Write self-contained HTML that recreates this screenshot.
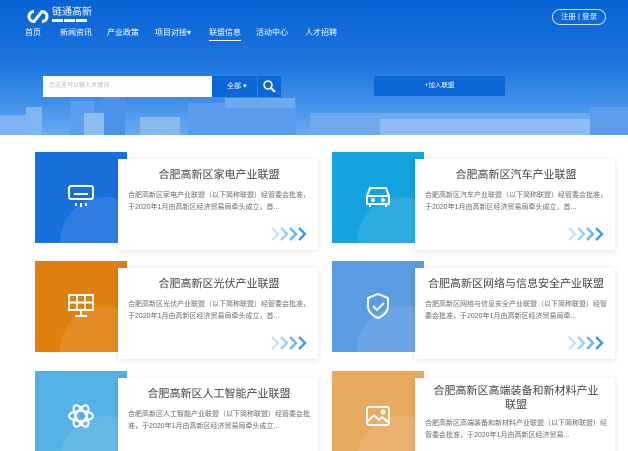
<!DOCTYPE html>
<html><head><meta charset="utf-8"><style>
*{margin:0;padding:0;box-sizing:border-box}
html,body{width:628px;height:451px;overflow:hidden}
body{background:#fff;font-family:"Liberation Sans","Noto Sans CJK SC",sans-serif;position:relative}
.hd{position:absolute;left:0;top:0;width:628px;height:135px;background:linear-gradient(180deg,#0a63d6 0%,#1a73df 45%,#3f8fe8 75%,#6aaaf0 100%);overflow:hidden}
.a{position:absolute}
.nav{position:absolute;top:27px;color:#fff;font-size:8px}
.card{position:absolute;width:92px;height:91px;overflow:hidden}
.card:after{content:"";position:absolute;left:25px;top:45px;width:90px;height:90px;border-radius:50%;background:rgba(255,255,255,.1)}
.card svg{position:absolute;left:31px;top:30px}
.w{position:absolute;width:200px;height:91px;background:#fff;box-shadow:0 1px 6px rgba(0,0,0,.12);padding:9px 8px 0 10px}
.w h3{font-weight:normal;font-size:11px;color:#444;text-align:center;line-height:14px;white-space:nowrap}
.w p{font-size:7px;color:#666;line-height:12px;margin-top:8px}
.ar{position:absolute;right:10px;bottom:8px}
</style></head><body>
<div class="hd">
 <svg class="a" style="left:0;top:95px" width="628" height="40">
  <rect x="26" y="12" width="16" height="28" fill="#7fb6f2"/><rect x="70" y="6" width="24" height="34" fill="#5a9eee"/><rect x="100" y="0" width="25" height="40" fill="#4a92ea"/><rect x="84" y="18" width="20" height="22" fill="#8cbcf2"/>
  <rect x="188" y="8" width="108" height="32" fill="#5a9cec"/><rect x="225" y="3" width="70" height="10" fill="#6ea8ee"/>
  <rect x="310" y="18" width="320" height="22" fill="#6ea8ef"/><rect x="380" y="24" width="220" height="16" fill="#8fbdf3"/><rect x="590" y="12" width="38" height="28" fill="#5b9ced"/>
  <rect x="0" y="20" width="26" height="20" fill="#7fb2f0"/><rect x="140" y="22" width="40" height="18" fill="#8ab9f2"/>
 </svg>
 <svg class="a" style="left:26px;top:9px" width="24" height="15"><path d="M8 2.5 A5 5 0 1 0 8 12.5 L16 2.5 A5 5 0 1 1 16 12.5" fill="none" stroke="#fff" stroke-width="3"/></svg>
 <div class="a" style="left:52px;top:7px;color:#fff;font-size:10px;line-height:11px">链通高新</div>
 <div class="a" style="left:52px;top:19px;width:36px;height:3px;background:repeating-linear-gradient(90deg,#fff 0 11px,transparent 11px 12px)"></div>
 <div class="nav" style="left:25px">首页</div><div class="nav" style="left:60px">新闻资讯</div><div class="nav" style="left:107px">产业政策</div><div class="nav" style="left:155px">项目对接▾</div><div class="nav" style="left:209px;border-bottom:1px solid #fff;padding-bottom:2px">联盟信息</div><div class="nav" style="left:256px">活动中心</div><div class="nav" style="left:305px">人才招聘</div>
 <div class="a" style="left:552px;top:9px;width:54px;height:16px;border:1px solid #cfe2fa;border-radius:8px;color:#fff;font-size:7.5px;text-align:center;line-height:14px">注册 | 登录</div>
 <div class="a" style="left:43px;top:76px;width:169px;height:21px;background:#fff;color:#bbb;font-size:6px;line-height:21px;padding-left:6px">您这里可以输入关键词</div>
 <div class="a" style="left:212px;top:76px;width:45px;height:21px;background:#0b66d8;color:#fff;font-size:7px;line-height:21px;padding-left:15px">全部 ▾</div>
 <div class="a" style="left:258px;top:76px;width:23px;height:21px;background:#0b66d8"><svg width="23" height="21"><circle cx="10" cy="9" r="4" fill="none" stroke="#fff" stroke-width="1.5"/><path d="M13 12 L17 16" stroke="#fff" stroke-width="2"/></svg></div>
 <div class="a" style="left:374px;top:76px;width:131px;height:20px;background:#0b66d8;color:#fff;font-size:6.5px;line-height:20px;text-align:center">+加入联盟</div>
</div>

<svg width="0" height="0" style="position:absolute"><defs><g id="arr" fill="none" stroke-width="2.4"><path d="M2 2l6 6-6 6" stroke="#c6e3fb"/><path d="M11 2l6 6-6 6" stroke="#9cd0f7"/><path d="M20 2l6 6-6 6" stroke="#6bb6f1"/><path d="M29 2l6 6-6 6" stroke="#3a9be8"/></g></defs></svg>

<div class="card" style="left:35px;top:152px;background:#1870dc"><svg width="30" height="30" fill="none" stroke="#fff" stroke-width="2"><rect x="3" y="4" width="24" height="13" rx="2"/><path d="M8 12h14M10 21v3M15 21v4M20 21v3"/></svg></div>
<div class="w" style="left:118px;top:159px"><h3>合肥高新区家电产业联盟</h3><p>合肥高新区家电产业联盟（以下简称联盟）经管委会批准，于2020年1月由高新区经济贸易局牵头成立，首...</p><svg class="ar" width="38" height="16"><use href="#arr"/></svg></div>
<div class="card" style="left:332px;top:152px;background:#14a3de"><svg width="30" height="30" fill="none" stroke="#fff" stroke-width="2"><path d="M7 6h16l3 8v8H4v-8z M4 14h22"/><circle cx="10" cy="18" r="1"/><circle cx="20" cy="18" r="1"/><path d="M7 22v3M23 22v3"/></svg></div>
<div class="w" style="left:415px;top:159px"><h3>合肥高新区汽车产业联盟</h3><p>合肥高新区汽车产业联盟（以下简称联盟）经管委会批准，于2020年1月由高新区经济贸易局牵头成立，首...</p><svg class="ar" width="38" height="16"><use href="#arr"/></svg></div>

<div class="card" style="left:35px;top:261px;background:#e07f0c"><svg width="30" height="30" fill="none" stroke="#fff" stroke-width="2"><rect x="3" y="4" width="24" height="15"/><path d="M3 11.5h24M11 4v15M19 4v15M15 19v5M9 25h12"/></svg></div>
<div class="w" style="left:118px;top:268px"><h3>合肥高新区光伏产业联盟</h3><p>合肥高新区光伏产业联盟（以下简称联盟）经管委会批准，于2020年1月由高新区经济贸易局牵头成立，首...</p><svg class="ar" width="38" height="16"><use href="#arr"/></svg></div>
<div class="card" style="left:332px;top:261px;background:#5a9ce2"><svg width="30" height="30" fill="none" stroke="#fff" stroke-width="2"><path d="M15 3l10 4v8c0 6-5 10-10 12C10 25 5 21 5 15V7z"/><path d="M10 15l4 4 7-7"/></svg></div>
<div class="w" style="left:415px;top:268px"><h3>合肥高新区网络与信息安全产业联盟</h3><p>合肥高新区网络与信息安全产业联盟（以下简称联盟）经管委会批准，于2020年1月由高新区经济贸易局牵...</p><svg class="ar" width="38" height="16"><use href="#arr"/></svg></div>

<div class="card" style="left:35px;top:371px;background:#55b2e4"><svg width="30" height="30" fill="none" stroke="#fff" stroke-width="2"><ellipse cx="15" cy="15" rx="12" ry="5"/><ellipse cx="15" cy="15" rx="12" ry="5" transform="rotate(60 15 15)"/><ellipse cx="15" cy="15" rx="12" ry="5" transform="rotate(-60 15 15)"/></svg></div>
<div class="w" style="left:118px;top:378px"><h3>合肥高新区人工智能产业联盟</h3><p>合肥高新区人工智能产业联盟（以下简称联盟）经管委会批准，于2020年1月由高新区经济贸易局牵头成立...</p></div>
<div class="card" style="left:332px;top:371px;background:#e8aa5e"><svg width="30" height="30" fill="none" stroke="#fff" stroke-width="2"><rect x="4" y="6" width="22" height="18" rx="2"/><path d="M4 21l7-7 5 5 3-3 7 6"/><circle cx="20" cy="11" r="1.5"/></svg></div>
<div class="w" style="left:415px;top:378px;padding-top:6px"><h3 style="white-space:normal;padding:0 8px">合肥高新区高端装备和新材料产业联盟</h3><p style="margin-top:6px">合肥高新区高端装备和新材料产业联盟（以下简称联盟）经管委会批准，于2020年1月由高新区经济贸易...</p></div>
</body></html>
